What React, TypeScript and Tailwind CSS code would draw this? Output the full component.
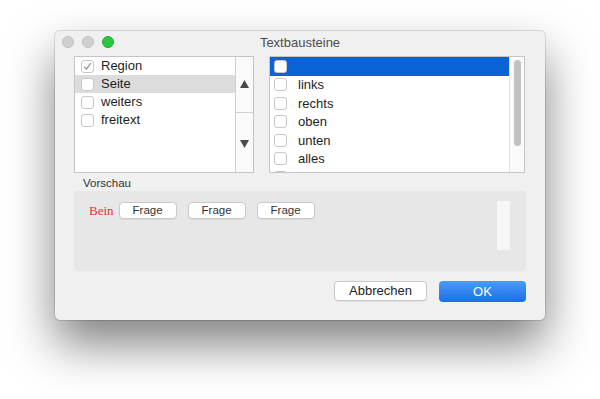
import React from 'react';

type Row = { label: string; checked?: boolean; active?: boolean; selected?: boolean };

const leftRows: Row[] = [
  { label: 'Region', checked: true },
  { label: 'Seite', active: true },
  { label: 'weiters' },
  { label: 'freitext' },
];

const rightRows: Row[] = [
  { label: '', selected: true },
  { label: 'links' },
  { label: 'rechts' },
  { label: 'oben' },
  { label: 'unten' },
  { label: 'alles' },
  { label: '' },
];

const Checkbox: React.FC<{ checked?: boolean }> = ({ checked }) => (
  <div className="w-[13px] h-[13px] shrink-0 rounded-[3px] border border-[#c8c8c8] bg-white flex items-center justify-center">
    {checked && (
      <svg width="9" height="9" viewBox="0 0 9 9">
        <path d="M1.2 4.8 L3.4 7.2 L7.8 1.2" fill="none" stroke="#9a9a9a" strokeWidth="1.3" />
      </svg>
    )}
  </div>
);

const App: React.FC = () => {
  return (
    <div
      className="w-[600px] h-[399px] bg-white pt-[31px] pl-[55px] overflow-hidden"
      style={{ fontFamily: '"Liberation Sans", Arial, sans-serif' }}
    >
      <div className="w-[490px] h-[289px] bg-[#f0f0f0] rounded-[5px] flex flex-col shadow-[0_0_0_1px_rgba(0,0,0,0.12),0_24px_48px_rgba(0,0,0,0.5)]">
        {/* Title bar */}
        <div className="h-[22px] relative flex items-center justify-center">
          <div className="absolute left-[7px] top-[5px] flex gap-[8px]">
            <div className="w-[12px] h-[12px] rounded-full bg-[#d0d0d0] border border-[#c2c2c2]" />
            <div className="w-[12px] h-[12px] rounded-full bg-[#d0d0d0] border border-[#c2c2c2]" />
            <div className="w-[12px] h-[12px] rounded-full bg-[#2bc840] border border-[#22ac35]" />
          </div>
          <span className="text-[13px] text-[#4d4d4d] mt-[1px]">Textbausteine</span>
        </div>

        {/* Lists */}
        <div className="flex gap-[15px] mt-[3px] px-[19px]">
          <div className="w-[180px] h-[117px] border border-[#c5c5c5] bg-white flex">
            <div className="flex-1 flex flex-col">
              {leftRows.map((r, i) => (
                <div
                  key={i}
                  className={`h-[18px] flex items-center pl-[6px] gap-[7px] ${r.active ? 'bg-[#dcdcdc]' : ''}`}
                >
                  <Checkbox checked={r.checked} />
                  <span className="text-[13px] text-[#1e1e1e]">{r.label}</span>
                </div>
              ))}
            </div>
            <div className="w-[18px] border-l border-[#d0d0d0] bg-[#fafafa] flex flex-col">
              <div className="h-[56px] border-b border-[#d0d0d0] flex items-center justify-center">
                <svg width="9" height="8" viewBox="0 0 9 8" className="mt-[-2px]">
                  <path d="M4.5 0 L9 8 L0 8 Z" fill="#4a4a4a" />
                </svg>
              </div>
              <div className="flex-1 flex items-center justify-center">
                <svg width="9" height="8" viewBox="0 0 9 8" className="mt-[3px]">
                  <path d="M0 0 L9 0 L4.5 8 Z" fill="#4a4a4a" />
                </svg>
              </div>
            </div>
          </div>

          <div className="w-[256px] h-[117px] border border-[#c5c5c5] bg-white flex overflow-hidden">
            <div className="flex-1 flex flex-col overflow-hidden">
              {rightRows.map((r, i) => (
                <div
                  key={i}
                  className={`h-[18.5px] shrink-0 flex items-center pl-[4px] gap-[11px] ${r.selected ? 'bg-[#0b63d5]' : ''}`}
                >
                  <Checkbox />
                  <span className="text-[13px] text-[#1e1e1e]">{r.label}</span>
                </div>
              ))}
            </div>
            <div className="w-[15px] border-l border-[#e2e2e2] bg-[#fafafa] pt-[3px] flex justify-center">
              <div className="w-[7px] h-[86px] rounded-full bg-[#c2c2c2]" />
            </div>
          </div>
        </div>

        {/* Vorschau */}
        <div className="px-[19px] mt-[3px]">
          <div className="text-[11.5px] text-[#333] pl-[9px] h-[15px] leading-[15px]">Vorschau</div>
          <div className="h-[80px] rounded-[4px] bg-[#e7e7e7] flex items-start pt-[11px] pl-[15px] pr-[16px]">
            <span
              className="text-[13px] text-[#e0352f] mr-[5px] leading-[17px]"
              style={{ fontFamily: '"Liberation Serif", "Times New Roman", serif' }}
            >
              Bein
            </span>
            <div className="flex gap-[11px]">
              {[0, 1, 2].map(i => (
                <div
                  key={i}
                  className="w-[58px] h-[17px] bg-white border border-[#c9c9c9] rounded-[4px] flex items-center justify-center text-[11.5px] text-[#333] shadow-[0_1px_0_rgba(0,0,0,0.06)]"
                >
                  Frage
                </div>
              ))}
            </div>
            <div className="flex-1" />
            <div className="w-[13px] h-[49px] bg-[#f7f7f7] mt-[-1px]" />
          </div>
        </div>

        {/* Buttons */}
        <div className="flex justify-end gap-[12px] px-[19px] mt-[10px]">
          <div className="w-[93px] h-[20px] bg-white border border-[#c8c8c8] rounded-[4px] flex items-center justify-center text-[13px] text-[#222] shadow-[0_1px_0_rgba(0,0,0,0.05)]">
            Abbrechen
          </div>
          <div className="w-[87px] h-[21px] rounded-[4px] bg-gradient-to-b from-[#4b9bf8] to-[#1a6ee8] flex items-center justify-center text-[13px] text-white">
            OK
          </div>
        </div>
      </div>
    </div>
  );
};

export default App;
